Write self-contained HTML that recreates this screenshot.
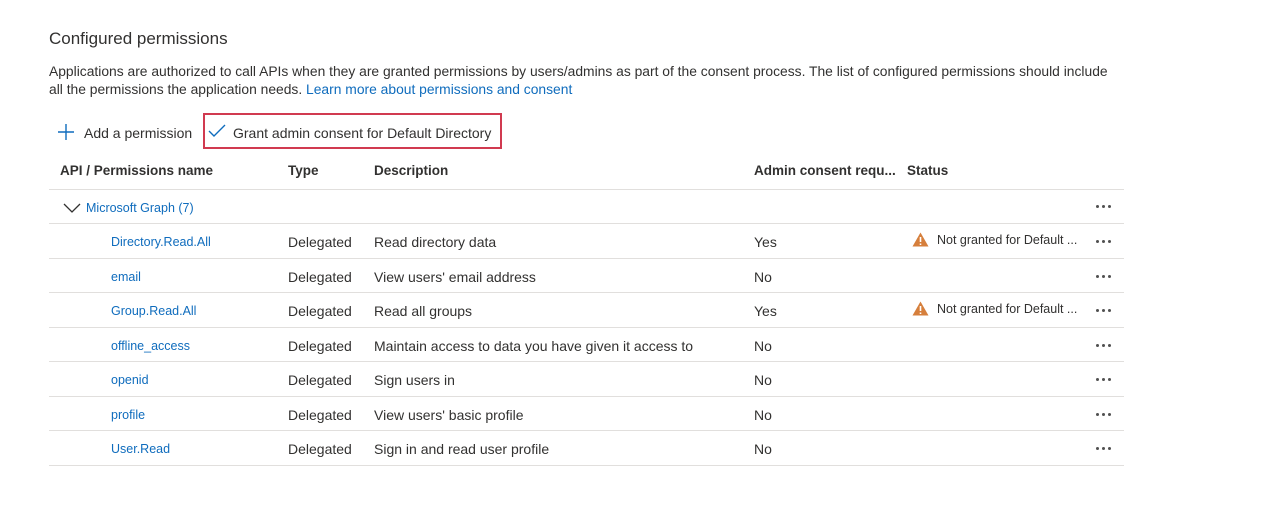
<!DOCTYPE html>
<html><head><meta charset="utf-8"><style>
body{margin:0;width:1280px;height:514px;background:#fff;font-family:"Liberation Sans",sans-serif;color:#323130;position:relative;overflow:hidden}
.a{position:absolute;white-space:nowrap}
h1{position:absolute;left:49px;top:29px;margin:0;font-size:17px;font-weight:normal}
.p{font-size:13.85px;left:49px}
.lnk{color:#0f6cbd}
.line{position:absolute;left:49px;width:1075px;height:1px;background:#e1dfdd}
.t{font-size:14px}
.b{font-weight:bold;font-size:13.5px}
.blue{color:#0f6cbd;font-size:12.5px}
.dots{position:absolute;left:1096px;width:18px;height:3px}
.dots i{position:absolute;top:0;width:3px;height:3px;border-radius:50%;background:#505050}
</style></head><body>
<h1>Configured permissions</h1>
<div class="a p" style="top:63px">Applications are authorized to call APIs when they are granted permissions by users/admins as part of the consent process. The list of configured permissions should include</div>
<div class="a p" style="top:81px">all the permissions the application needs. <span class="lnk">Learn more about permissions and consent</span></div>
<svg class="a" style="left:57px;top:123px" width="18" height="18"><path d="M9 1V17M1 9H17" stroke="#0f6cbd" stroke-width="1.4"/></svg>
<div class="a t" style="left:84px;top:125px">Add a permission</div>
<div class="a" style="left:203px;top:113px;width:295px;height:32px;border:2px solid #d13a50"></div>
<svg class="a" style="left:208px;top:124px" width="18" height="14"><path d="M1 7L6 12L17 1" stroke="#0f6cbd" stroke-width="1.4" fill="none"/></svg>
<div class="a t" style="left:233px;top:125px">Grant admin consent for Default Directory</div>
<div class="a b" style="left:60px;top:163px">API / Permissions name</div>
<div class="a b" style="left:288px;top:163px">Type</div>
<div class="a b" style="left:374px;top:163px">Description</div>
<div class="a b" style="left:754px;top:163px">Admin consent requ...</div>
<div class="a b" style="left:907px;top:163px">Status</div>
<div class="line" style="top:189px"></div>
<svg class="a" style="left:63px;top:203px" width="18" height="11"><path d="M1 1L9 9L17 1" stroke="#323130" stroke-width="1.3" fill="none"/></svg>
<div class="a blue" style="left:86px;top:201px">Microsoft Graph (7)</div>
<div class="dots" style="top:205px"><i style="left:0"></i><i style="left:6px"></i><i style="left:12px"></i></div>
<div class="line" style="top:223px"></div>
<div id="rows"></div>
<script>
var r=[["Directory.Read.All","Read directory data","Yes",1],["email","View users' email address","No",0],["Group.Read.All","Read all groups","Yes",1],["offline_access","Maintain access to data you have given it access to","No",0],["openid","Sign users in","No",0],["profile","View users' basic profile","No",0],["User.Read","Sign in and read user profile","No",0]];
var h="";r.forEach(function(x,i){var y=223+i*34.5;
h+='<div class="a blue" style="left:111px;top:'+(y+12)+'px">'+x[0]+'</div><div class="a t" style="left:288px;top:'+(y+11)+'px">Delegated</div><div class="a t" style="left:374px;top:'+(y+11)+'px">'+x[1]+'</div><div class="a t" style="left:754px;top:'+(y+11)+'px">'+x[2]+'</div>';
if(x[3])h+='<svg class="a" style="left:912px;top:'+(y+9)+'px" width="17" height="15"><path d="M8.5 0.5L16.5 14.5H0.5Z" fill="#d67f3c"/><path d="M8.5 5V10M8.5 11.5V13" stroke="#fff" stroke-width="1.6"/></svg><div class="a" style="left:937px;top:'+(y+10)+'px;font-size:12.5px">Not granted for Default ...</div>';
h+='<div class="dots" style="top:'+(y+17)+'px"><i style="left:0"></i><i style="left:6px"></i><i style="left:12px"></i></div><div class="line" style="top:'+(y+34.5)+'px"></div>';});
document.getElementById("rows").innerHTML=h;
</script>
</body></html>
